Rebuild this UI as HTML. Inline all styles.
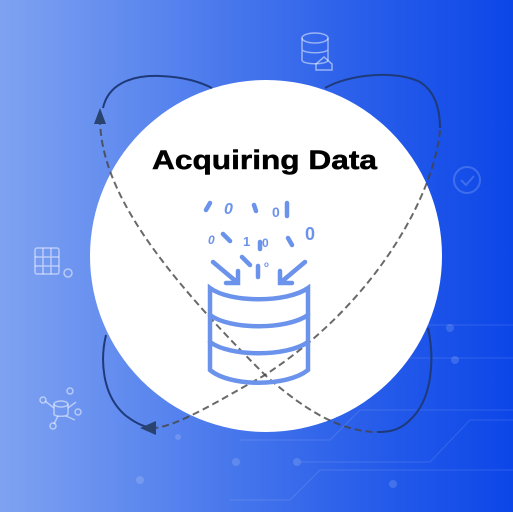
<!DOCTYPE html>
<html><head><style>
html,body{margin:0;padding:0;width:513px;height:512px;overflow:hidden}
body{background:linear-gradient(90deg,#7fa2f1 0%,#5a86ee 30%,#2f63ea 65%,#0c46e8 100%);position:relative;font-family:"Liberation Sans",sans-serif}
svg{position:absolute;left:0;top:0}
</style></head><body>
<svg width="513" height="512" viewBox="0 0 513 512">
<g stroke="#ffffff" stroke-opacity="0.12" stroke-width="1" fill="none">
<path d="M240 440H330L360 410H513"/><path d="M300 462H430L470 420H513"/><path d="M230 500H290L320 470H513"/><path d="M420 325H513"/><path d="M400 358H513"/>
</g>
<g fill="#ffffff" fill-opacity="0.15"><circle cx="236" cy="462" r="4"/><circle cx="297" cy="462" r="4"/><circle cx="140" cy="480" r="4"/><circle cx="450" cy="328" r="4"/><circle cx="455" cy="360" r="4"/><circle cx="393" cy="484" r="4"/><circle cx="178" cy="437" r="3"/></g>
<circle cx="266" cy="256" r="176" fill="#ffffff"/>
<text x="152" y="169" textLength="225" lengthAdjust="spacingAndGlyphs" font-family="Liberation Sans" font-weight="bold" font-size="27" fill="#000" stroke="#000" stroke-width="0.5">Acquiring Data</text>
<g fill="none" stroke="#1e3a7a" stroke-width="2">
<path d="M103 108C108 85 130 75 160 76C185 77 200 82 212 88"/>
<path d="M325 88C350 74 395 70 420 82C436 92 440 110 440 128"/>
<path d="M106 335C100 360 102 395 125 415C135 423 145 428 155 428"/>
<path d="M428 328C435 360 432 400 410 420C400 430 390 432 378 432"/>
</g>
<g fill="none" stroke="#444" stroke-opacity="0.8" stroke-width="2" stroke-dasharray="7,4">
<path d="M100 118C100 190 160 270 265 375C310 415 345 432 378 432"/>
<path d="M440 130C435 190 380 300 265 375C220 400 180 425 155 428"/>
</g>
<polygon points="100,108 94,124 106,124" fill="#2a4270"/>
<polygon points="140,428 156,421 156,435" fill="#2a4270"/>
<g fill="none" stroke="#6c93ec" stroke-width="4.5" stroke-linecap="round">
<path d="M210 288C230 303 287 303 308 288V370C287 387 230 387 210 370Z"/>
<path d="M210 315C230 330 287 330 308 315"/>
<path d="M210 342C230 357 287 357 308 342"/>
<path d="M213 262L238 283M226 283H238V271"/>
<path d="M305 262L280 283M292 283H280V271"/>
<path d="M258 266V277"/><path d="M242 257L250 265"/><path d="M206 210L210 203"/>
<path d="M254 205L256 211"/><path d="M223 234L230 241"/><path d="M260 242V249"/><path d="M288 238L292 245"/><path d="M287 203V216"/>
</g>
<g fill="#6c93ec" font-family="Liberation Sans" font-weight="bold">
<text x="224" y="214" font-size="16" font-style="italic">0</text>
<text x="272" y="217" font-size="14">0</text>
<text x="305" y="240" font-size="18">0</text>
<text x="208" y="244" font-size="12" font-style="italic">0</text>
<text x="243" y="246" font-size="13">1</text>
<text x="262" y="247" font-size="12">0</text>
<text x="264" y="267" font-size="8">o</text>
</g>
<g fill="none" stroke="#ffffff" stroke-opacity="0.5" stroke-width="1.5">
<ellipse cx="315" cy="38" rx="13" ry="5"/><path d="M302 38V60C302 65 328 65 328 60V38M302 49C302 54 328 54 328 49"/>
<path d="M316 64L324 57L332 64V70H316Z"/>
<rect x="35" y="248" width="24" height="26" rx="2"/><path d="M35 257H59M35 266H59M43 248V274M51 248V274"/><circle cx="68" cy="273" r="4"/>
<ellipse cx="61" cy="404" rx="7" ry="3"/><path d="M54 404V414C54 417 68 417 68 414V404"/>
<path d="M54 408L45 401M68 408L76 402M58 416L54 424M66 416L75 420"/>
<circle cx="43" cy="400" r="3"/><circle cx="70" cy="391" r="3"/><circle cx="78" cy="412" r="3"/><circle cx="53" cy="426" r="3"/>
</g>
<g fill="none" stroke="#ffffff" stroke-opacity="0.18" stroke-width="2"><circle cx="467" cy="180" r="13"/><path d="M461 180l5 5 8-9"/></g>
</svg>
</body></html>
